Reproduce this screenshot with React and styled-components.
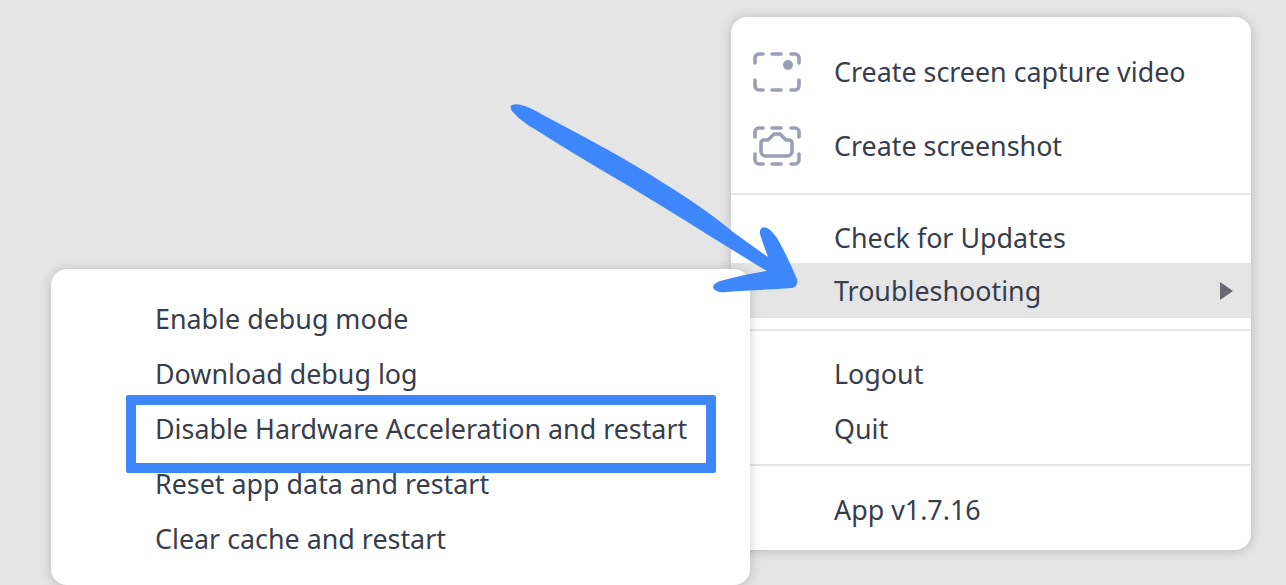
import React from 'react';
import styled, { createGlobalStyle } from 'styled-components';

const GlobalStyle = createGlobalStyle`
  html, body {
    margin: 0;
    padding: 0;
    background: #e5e5e5;
  }
`;

const Page = styled.div`
  position: relative;
  width: 1286px;
  height: 585px;
  overflow: hidden;
  background: #e5e5e5;
  font-family: "Noto Sans", "Open Sans", "Liberation Sans", sans-serif;
  font-size: 26.85px;
  color: #383d4c;
`;

const Menu = styled.div`
  position: absolute;
  box-sizing: border-box;
  background: #fff;
  border-radius: 16px;
  box-shadow: 0 1px 12px rgba(0, 0, 0, 0.2);
`;

const MainMenu = styled(Menu)`
  left: 731px;
  top: 17px;
  width: 520px;
  height: 533px;
  padding-top: 17px;
`;

const SubMenu = styled(Menu)`
  left: 51px;
  top: 269px;
  width: 699px;
  height: 316px;
  padding-top: 22px;
`;

const IconRow = styled.div`
  display: flex;
  align-items: center;
  height: 74px;
  padding-left: 22px;
  gap: 33px;

  svg {
    margin-top: 2px;
  }
`;

const Row = styled.div`
  display: flex;
  align-items: center;
  justify-content: space-between;
  height: ${p => p.$height || 55}px;
  padding: 0 18px 0 103px;
  background: ${p => (p.$active ? '#e5e5e5' : 'transparent')};
`;

const SubRow = styled.div`
  display: flex;
  align-items: center;
  height: 55px;
  padding-left: 104px;
`;

const Divider = styled.div`
  height: 2px;
  background: #e6e6ea;
  margin: ${p => p.$before}px 0 ${p => p.$after}px;
`;

const Caret = styled.span`
  width: 0;
  height: 0;
  border-left: 13px solid #666a70;
  border-top: 9px solid transparent;
  border-bottom: 9px solid transparent;
`;

const Highlight = styled.div`
  position: absolute;
  left: 126px;
  top: 395px;
  width: 590px;
  height: 78px;
  box-sizing: border-box;
  border: 10px solid #3d87fb;
  border-radius: 2px;
`;

const Arrow = styled.svg`
  position: absolute;
  left: 0;
  top: 0;
  pointer-events: none;
`;

const RecordIcon = () => (
  <svg width="48" height="40" viewBox="0 0 48 40" fill="none" stroke="#9a9fb6" strokeWidth="3.6" strokeLinecap="round">
    <path d="M2 11V6a4 4 0 0 1 4-4h4" />
    <path d="M19 2h9" />
    <path d="M38 2h4a4 4 0 0 1 4 4v5" />
    <path d="M2 28v6a4 4 0 0 0 4 4h4" />
    <path d="M19 38h9" />
    <path d="M38 38h4a4 4 0 0 0 4-4v-6" />
    <circle cx="35" cy="13" r="5" fill="#9a9fb6" stroke="none" />
  </svg>
);

const ShotIcon = () => (
  <svg width="48" height="40" viewBox="0 0 48 40" fill="none" stroke="#9a9fb6" strokeWidth="3.6" strokeLinecap="round" strokeLinejoin="round">
    <path d="M2 11V6a4 4 0 0 1 4-4h4" />
    <path d="M19 2h9" />
    <path d="M38 2h4a4 4 0 0 1 4 4v5" />
    <path d="M2 28v6a4 4 0 0 0 4 4h4" />
    <path d="M19 38h9" />
    <path d="M38 38h4a4 4 0 0 0 4-4v-6" />
    <path d="M8 17a3 3 0 0 1 3-3h4l6-6h6l6 6h3a3 3 0 0 1 3 3v8a5 5 0 0 1-5 5H13a5 5 0 0 1-5-5z" />
  </svg>
);

const App = () => (
  <Page>
    <GlobalStyle />
    <MainMenu>
      <IconRow>
        <RecordIcon />
        Create screen capture video
      </IconRow>
      <IconRow>
        <ShotIcon />
        Create screenshot
      </IconRow>
      <Divider $before={11} $after={16} />
      <Row $height={52}>Check for Updates</Row>
      <Row $active>
        Troubleshooting
        <Caret />
      </Row>
      <Divider $before={11} $after={15} />
      <Row>Logout</Row>
      <Row>Quit</Row>
      <Divider $before={8} $after={16} />
      <Row>App v1.7.16</Row>
    </MainMenu>
    <SubMenu>
      <SubRow>Enable debug mode</SubRow>
      <SubRow>Download debug log</SubRow>
      <SubRow>Disable Hardware Acceleration and restart</SubRow>
      <SubRow>Reset app data and restart</SubRow>
      <SubRow>Clear cache and restart</SubRow>
    </SubMenu>
    <Highlight />
    <Arrow width="1286" height="585" viewBox="0 0 1286 585">
      <path
        fill="#3d87fb"
        d="M512 105C518 103 526 106 534 110C578 134 622 156 665 184C691 200 714 216 733 232L768 257C765 248 762 241 760 234C759 228 763 226 767 228C771 230 774 234 777 238C785 252 791 265 797 279C798 284 796 287 792 288C770 290 748 290 727 292C720 293 714 291 713 287C714 283 719 281 724 280C738 276 752 273 767 271C722 244 677 215 632 188C598 168 564 148 533 128C526 124 518 118 513 112C510 109 510 106 512 105Z"
      />
    </Arrow>
  </Page>
);

export default App;
